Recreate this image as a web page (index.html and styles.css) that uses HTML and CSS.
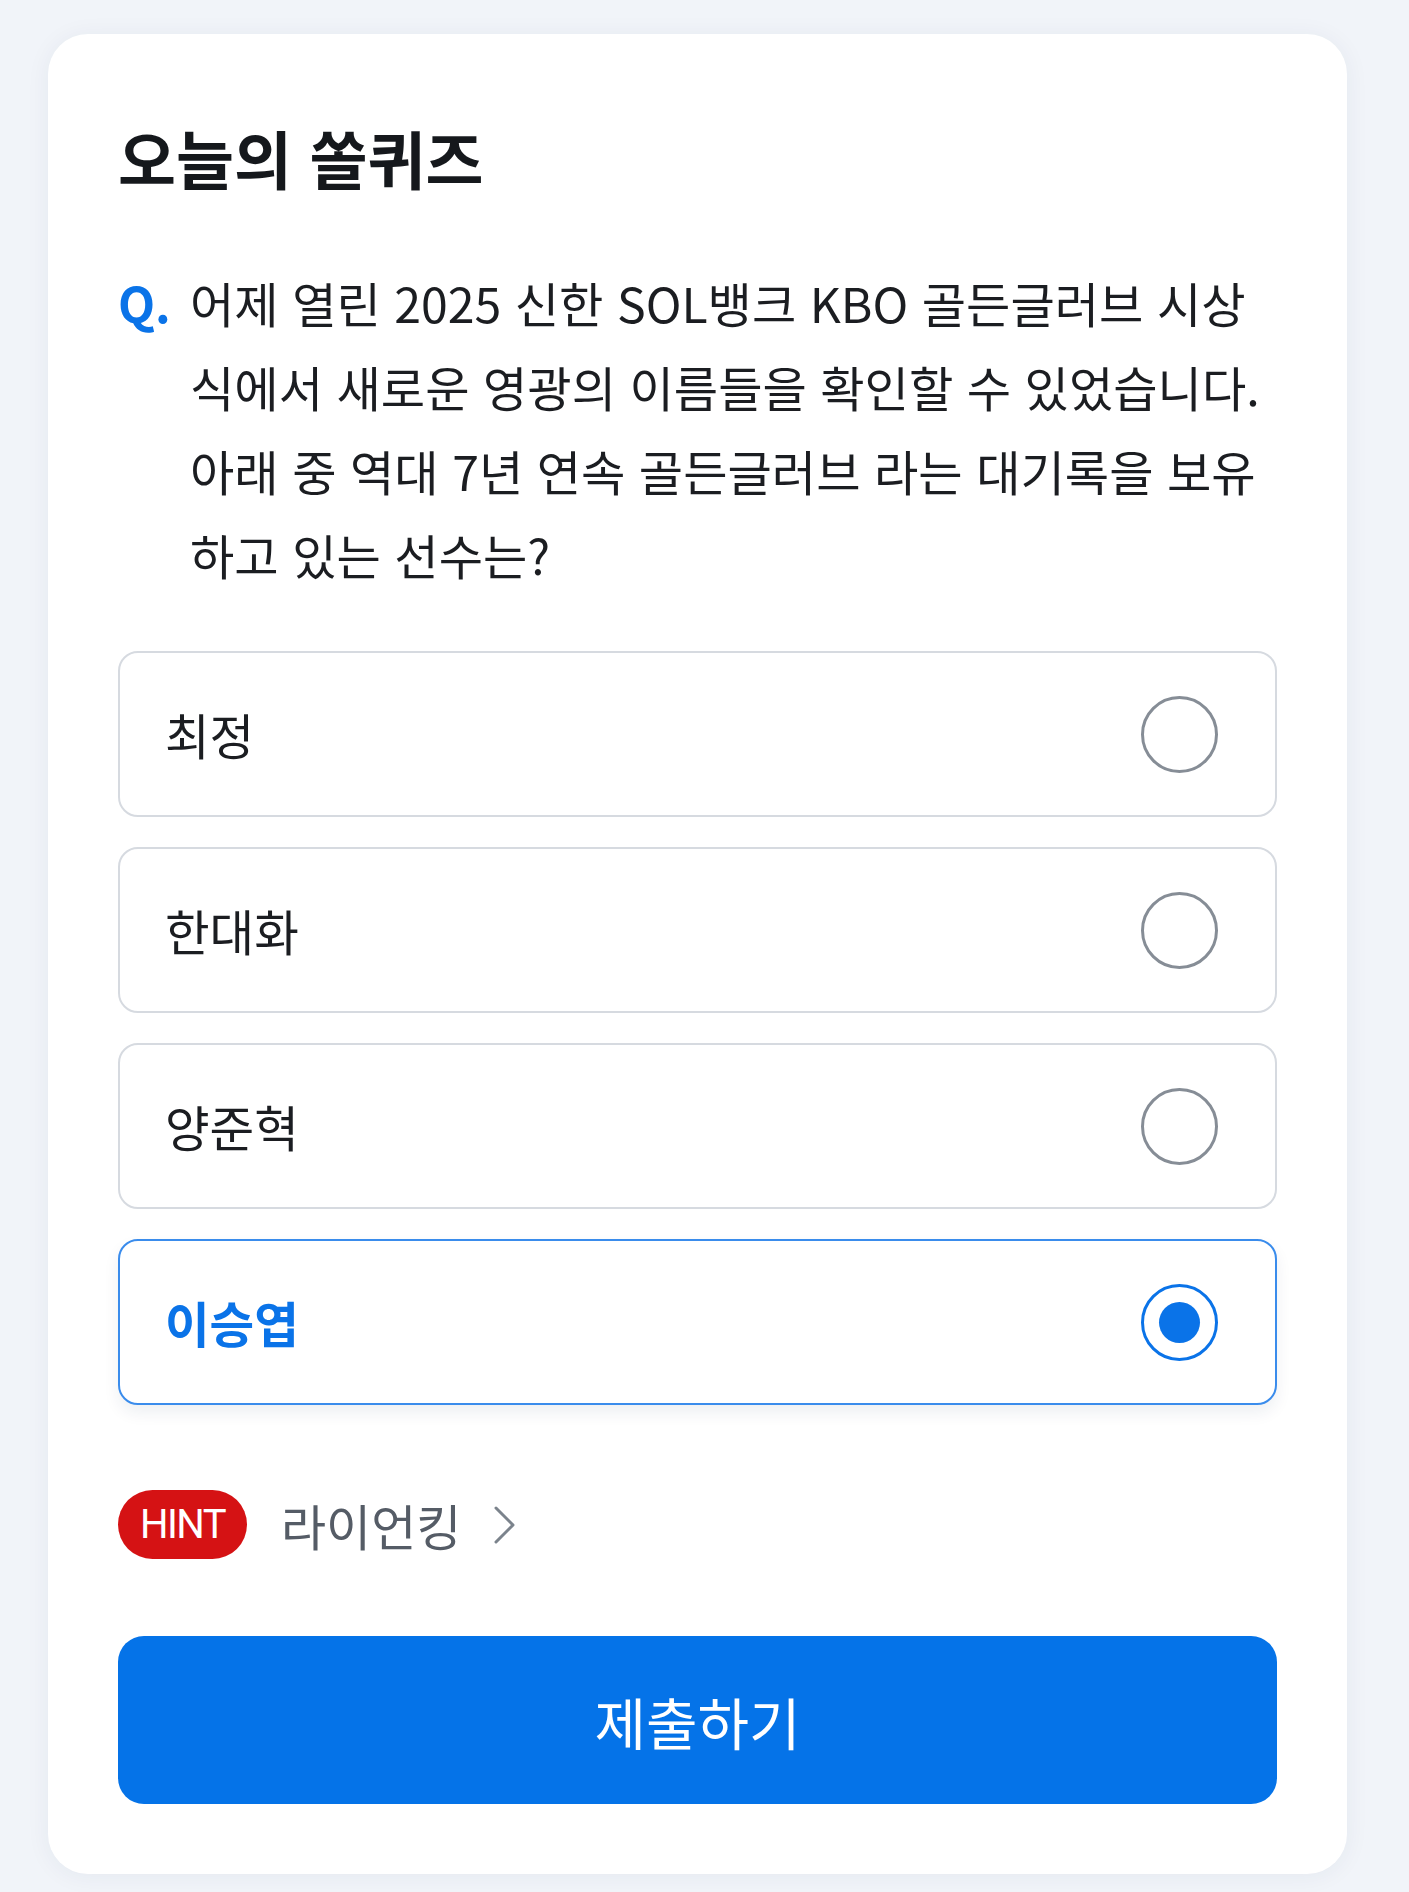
FILE: index.html
```html
<!DOCTYPE html>
<html lang="ko">
<head>
    <meta charset="UTF-8">
    <title>오늘의 쏠퀴즈</title>
    <link rel="stylesheet" href="styles.css">
</head>
<body>
    <div class="pagina">
    <div class="tarjeta-quiz">

        <h1 class="titulo">오늘의 쏠퀴즈</h1>

        <div class="pregunta">
            <span class="marca-q">Q.</span>
            <p class="texto-pregunta">어제 열린 2025 신한 SOL뱅크 KBO 골든글러브 시상<br>식에서 새로운 영광의 이름들을 확인할 수 있었습니다.<br>아래 중 역대 7년 연속 골든글러브 라는 대기록을 보유<br>하고 있는 선수는?</p>
        </div>

        <div class="opciones">
            <div class="opcion">
                <span>최정</span>
                <span class="radio"></span>
            </div>
            <div class="opcion">
                <span>한대화</span>
                <span class="radio"></span>
            </div>
            <div class="opcion">
                <span>양준혁</span>
                <span class="radio"></span>
            </div>
            <div class="opcion seleccionada">
                <span>이승엽</span>
                <span class="radio"></span>
            </div>
        </div>

        <div class="pista">
            <span class="etiqueta-hint">HINT</span>
            <span class="texto-pista">라이언킹</span>
            <svg class="flecha" width="21" height="38" viewBox="0 0 21 38">
                <polyline points="2,2 19,19 2,36" fill="none" stroke="#7b838c" stroke-width="3" stroke-linecap="round" stroke-linejoin="round"/>
            </svg>
        </div>

        <button class="boton-enviar">제출하기</button>

    </div>
    </div>
</body>
</html>
```

FILE: styles.css
```css
body {
    font-family: "Noto Sans CJK KR", "Noto Sans", sans-serif;
    margin: 0;
    background-color: #f1f4f9;
    color: #1b1d21;
}

.pagina {
    padding: 34px 62px 18px 48px;
}

.tarjeta-quiz {
    background-color: #fff;
    border-radius: 40px;
    padding: 70px;
    box-shadow: 0 2px 24px rgba(30, 50, 90, 0.06);
}

.titulo {
    margin: 15px 0 0;
    font-size: 63px;
    line-height: 76px;
    font-weight: 700;
    color: #15181c;
}

.pregunta {
    display: flex;
    margin-top: 65px;
    font-size: 48.2px;
    line-height: 84px;
}
.marca-q {
    flex: none;
    width: 72px;
    color: #0a73e8;
    font-weight: 700;
}
.texto-pregunta {
    margin: 0;
    white-space: nowrap;
}

.opciones {
    margin-top: 55px;
    display: flex;
    flex-direction: column;
    gap: 30px;
}
.opcion {
    box-sizing: border-box;
    height: 166px;
    border: 2px solid #d6dae0;
    border-radius: 20px;
    padding: 0 57px 0 45px;
    display: flex;
    align-items: center;
    justify-content: space-between;
    font-size: 48.5px;
    background-color: #fff;
}
.radio {
    box-sizing: border-box;
    width: 77px;
    height: 77px;
    border: 3px solid #868d96;
    border-radius: 50%;
    display: flex;
    align-items: center;
    justify-content: center;
}
.seleccionada {
    border-color: #3a8cec;
    color: #0a73e8;
    font-weight: 700;
    box-shadow: 0 8px 16px rgba(20, 40, 80, 0.07);
}
.seleccionada .radio {
    border-color: #0a73e8;
}
.seleccionada .radio::after {
    content: "";
    width: 41px;
    height: 41px;
    border-radius: 50%;
    background-color: #0a73e8;
}

.pista {
    margin-top: 85px;
    height: 69px;
    display: flex;
    align-items: center;
}
.etiqueta-hint {
    width: 129px;
    height: 69px;
    border-radius: 35px;
    background-color: #d51214;
    color: #fff;
    font-family: Roboto, "Noto Sans", sans-serif;
    font-size: 40px;
    letter-spacing: -1.5px;
    display: flex;
    align-items: center;
    justify-content: center;
}
.texto-pista {
    margin-left: 34px;
    font-size: 49px;
    color: #555c66;
}
.flecha {
    margin-left: 33px;
}

.boton-enviar {
    display: block;
    width: 100%;
    height: 168px;
    margin-top: 77px;
    border: none;
    border-radius: 26px;
    background-color: #0573e8;
    color: #fff;
    font-family: "Noto Sans CJK KR", sans-serif;
    font-size: 56px;
}
```
